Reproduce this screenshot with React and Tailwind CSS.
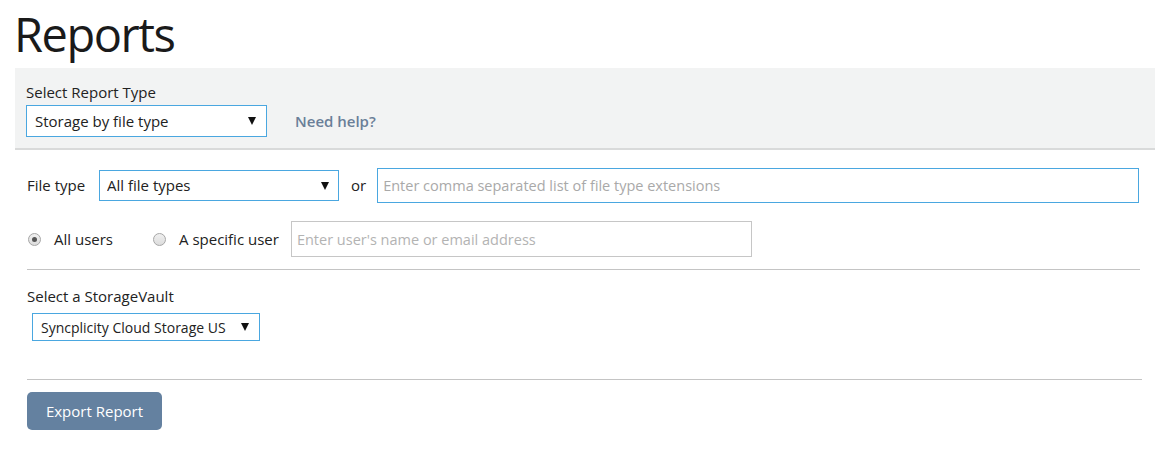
import React, { useState } from 'react';

const font = { fontFamily: '"Open Sans", "Noto Sans", sans-serif' };

const Arrow = () => (
  <svg width="8" height="8" viewBox="0 0 8 8" className="shrink-0">
    <polygon points="0,0 8,0 4,8" fill="#111" />
  </svg>
);

const FakeSelect = ({ value, className = '', textClass = 'text-[15px]' }) => (
  <div className={`flex items-center justify-between bg-white border border-[#4aa7e0] ${className}`}>
    <span className={`${textClass} text-[#222] truncate`}>{value}</span>
    <Arrow />
  </div>
);

const Radio = ({ checked, label, onClick }) => (
  <button type="button" onClick={onClick} className="flex items-center cursor-pointer">
    <span className="w-[13px] h-[13px] rounded-full border border-[#a6a6a6] bg-gradient-to-b from-[#f0f0f0] to-[#dcdcdc] flex items-center justify-center">
      {checked && <span className="w-[5px] h-[5px] rounded-full bg-[#555]"></span>}
    </span>
    <span className="ml-[13px] text-[15px] text-[#222]">{label}</span>
  </button>
);

export default function App() {
  const [userMode, setUserMode] = useState('all');

  return (
    <div className="bg-white min-h-[462px] w-[1162px] pt-[4px]" style={font}>
      <h1 className="ml-[14px] text-[47px] leading-[60px] text-[#1a1a1a] font-normal tracking-[-1.5px]">Reports</h1>

      {/* report type panel */}
      <div className="ml-[15px] w-[1140px] mt-[4px] bg-[#f2f3f3] border-b-2 border-[#d9dada] px-[11px] pt-[14px] pb-[11px]">
        <div className="text-[15px] leading-[20px] text-[#222] mb-[3px]">Select Report Type</div>
        <div className="flex items-center">
          <FakeSelect value="Storage by file type" className="w-[241px] h-[32px] pl-[8px] pr-[10px] border-[1.5px]" textClass="text-[15px]" />
          <a href="#" className="ml-[28px] text-[15px] font-semibold text-[#6a7f98] no-underline">Need help?</a>
        </div>
      </div>

      <div className="ml-[27px] w-[1114px]">
        {/* file type row */}
        <div className="flex items-center mt-[18px]">
          <span className="text-[15px] text-[#222] w-[72px]">File type</span>
          <FakeSelect value="All file types" className="w-[240px] h-[31px] pl-[7px] pr-[9px]" textClass="text-[15px]" />
          <span className="ml-[12px] text-[15px] text-[#222]">or</span>
          <input
            className="ml-[11px] w-[762px] h-[35px] border border-[#4aa7e0] px-[5px] text-[14.5px] outline-none placeholder:text-[#a9a9a9]"
            placeholder="Enter comma separated list of file type extensions"
          />
        </div>

        {/* user row */}
        <div className="flex items-center mt-[18px]">
          <div className="w-[126px] pl-[1px]">
            <Radio checked={userMode === 'all'} label="All users" onClick={() => setUserMode('all')} />
          </div>
          <Radio checked={userMode === 'one'} label="A specific user" onClick={() => setUserMode('one')} />
          <input
            className="ml-[12px] w-[461px] h-[36px] border border-[#c6c6c6] px-[5px] text-[14.5px] outline-none placeholder:text-[#b3b3b3]"
            placeholder="Enter user's name or email address"
          />
        </div>

        <div className="mt-[12px] h-px bg-[#c4c4c4] w-[1113px]"></div>

        {/* storage vault */}
        <div className="mt-[16px] text-[15px] leading-[20px] text-[#222]">Select a StorageVault</div>
        <FakeSelect value="Syncplicity Cloud Storage US" className="ml-[5px] mt-[7px] w-[228px] h-[28px] pl-[8px] pr-[10px]" textClass="text-[14px]" />

        <div className="mt-[38px] h-px bg-[#c4c4c4] w-[1115px]"></div>

        <button type="button" className="mt-[12px] w-[135px] h-[38px] rounded-[5px] bg-[#6481a0] text-white text-[15px]">
          Export Report
        </button>
      </div>
    </div>
  );
}
